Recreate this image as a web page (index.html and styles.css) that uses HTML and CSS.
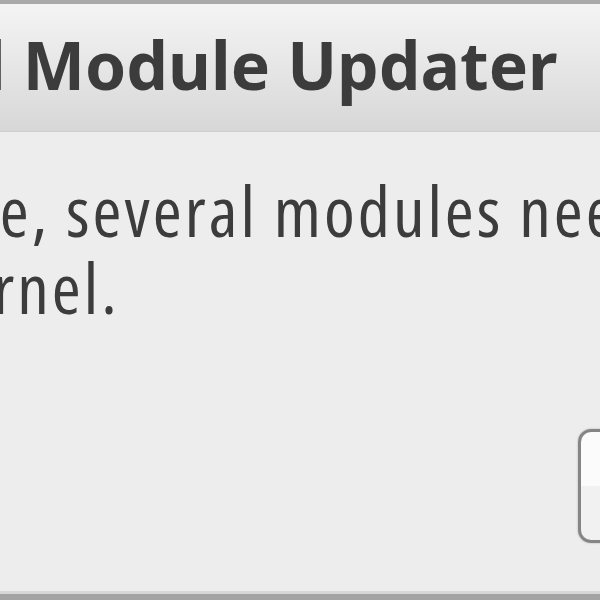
FILE: index.html
```html
<!DOCTYPE html>
<html lang="en">
<head>
  <meta charset="UTF-8">
  <meta name="viewport" content="width=device-width, initial-scale=1.0">
  <title>Kernel Module Updater</title>
  <link rel="stylesheet" href="styles.css">
</head>
<body>
  <div class="window">
    <div class="titlebar">
      <span class="title">Kernel Module Updater</span>
    </div>
    <div class="content">
      <p class="message">
        <span class="line line-one">hardware, several modules need</span>
        <span class="line line-two">kernel.</span>
      </p>
      <div class="actions">
        <button class="btn">Cancel</button>
      </div>
    </div>
  </div>
</body>
</html>
```

FILE: styles.css
```css
html, body {
  margin: 0;
  height: 100%;
  overflow: hidden;
}

body {
  background: #ededed;
  font-family: "Noto Sans", "Open Sans", sans-serif;
  color: #3c3c3c;
}

.window {
  height: 600px;
  display: flex;
  flex-direction: column;
  border-top: 4px solid #a9a9a9;
  border-bottom: 6px solid #a4a4a4;
  box-sizing: border-box;
  filter: blur(0.7px);
}

.titlebar {
  height: 127px;
  flex: none;
  background: linear-gradient(#f4f4f4, #e9e9e9 40%, #d7d7d7);
  border-bottom: 1px solid #cfcfcf;
  display: flex;
  align-items: center;
  overflow: hidden;
  white-space: nowrap;
}

.title {
  font-weight: bold;
  font-size: 66px;
  margin-left: -209px;
  margin-top: -8px;
}

.content {
  flex: 1;
  display: flex;
  flex-direction: column;
  overflow: hidden;
  border-bottom: 3px solid #d8d8d8;
}

.message {
  margin: 40px 0 0;
  font-family: "Open Sans", "Noto Sans", sans-serif;
  font-size: 70px;
  font-stretch: 82%;
  letter-spacing: 3px;
  line-height: 77px;
  white-space: nowrap;
}

.line {
  display: block;
}

.line-one {
  margin-left: -226px;
}

.line-two {
  margin-left: -69px;
}

.actions {
  margin-top: auto;
  display: flex;
  padding: 0 0 48px 578px;
}

.btn {
  flex: none;
  width: 200px;
  height: 114px;
  border: 3px solid #858585;
  border-radius: 13px;
  background: linear-gradient(#fbfbfb 50%, #f1f1f1 50%);
  font: inherit;
  box-shadow: 0 0 2px rgba(0,0,0,0.3);
}
```
